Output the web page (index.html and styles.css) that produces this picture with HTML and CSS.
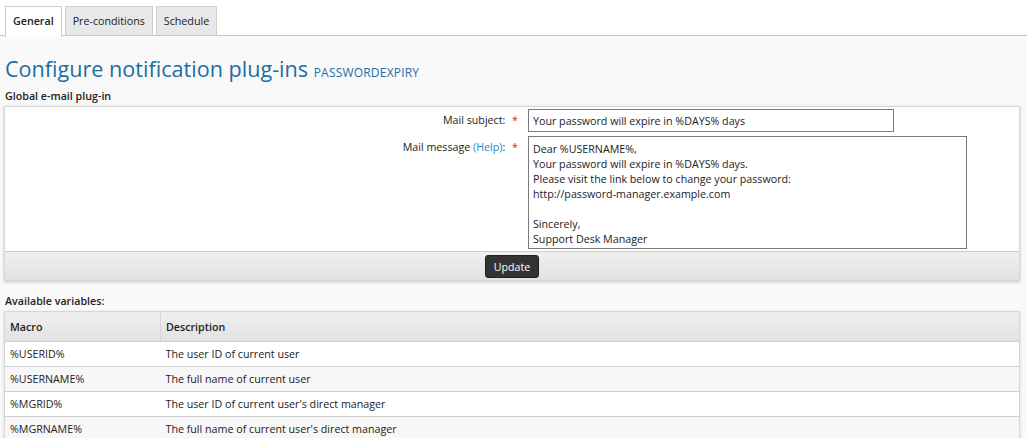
FILE: index.html
```html
<!DOCTYPE html>
<html lang="en">
<head>
    <meta charset="UTF-8">
    <title>Configure notification plug-ins</title>
    <link rel="stylesheet" href="styles.css">
</head>
<body>
    <div class="tabs">
        <a class="tab active" href="#">General</a>
        <a class="tab" href="#">Pre-conditions</a>
        <a class="tab" href="#">Schedule</a>
    </div>
    <div class="content">
        <h1>Configure notification plug-ins <small>PASSWORDEXPIRY</small></h1>
        <h3>Global e-mail plug-in</h3>
        <form class="panel">
            <div class="panel-body">
                <div class="row">
                    <label class="label">Mail subject: <span class="req">*</span></label>
                    <input type="text" class="subject" value="Your password will expire in %DAYS% days">
                </div>
                <div class="row">
                    <label class="label">Mail message <a href="#">(Help)</a>: <span class="req">*</span></label>
                    <textarea class="message">Dear %USERNAME%,
Your password will expire in %DAYS% days.
Please visit the link below to change your password:
http://password-manager.example.com

Sincerely,
Support Desk Manager</textarea>
                </div>
            </div>
            <div class="panel-footer">
                <button type="button" class="btn">Update</button>
            </div>
        </form>
        <h3 class="vars-title">Available variables:</h3>
        <table class="grid">
            <thead>
                <tr><th class="col-macro">Macro</th><th>Description</th></tr>
            </thead>
            <tbody>
                <tr><td>%USERID%</td><td>The user ID of current user</td></tr>
                <tr><td>%USERNAME%</td><td>The full name of current user</td></tr>
                <tr><td>%MGRID%</td><td>The user ID of current user's direct manager</td></tr>
                <tr><td>%MGRNAME%</td><td>The full name of current user's direct manager</td></tr>
            </tbody>
        </table>
    </div>
</body>
</html>
```

FILE: styles.css
```css
html, body {
    margin: 0;
    height: 100%;
}
body {
    font-family: "Open Sans", sans-serif;
    font-size: 10.7px;
    color: #222;
    background-color: #f9f9f9;
    overflow: hidden;
}
.tabs {
    display: flex;
    gap: 3px;
    padding: 6px 0 0 5px;
    background-color: #fff;
    border-bottom: 1px solid #c8c8c8;
    height: 29px;
    box-sizing: content-box;
}
.tab {
    display: block;
    padding: 0 7px;
    line-height: 28px;
    height: 28px;
    border: 1px solid #cfcfcf;
    border-bottom: none;
    background-color: #e8e8e8;
    color: #222;
    text-decoration: none;
}
.tab.active {
    background-color: #fff;
    font-weight: 600;
    height: 30px;
    margin-bottom: -1px;
}
.content {
    padding: 0 7px 0 4px;
}
h1 {
    font-size: 21.6px;
    font-weight: normal;
    color: #1c6ea4;
    margin: 19px 0 0 1px;
    line-height: 28px;
}
h1 small {
    font-size: 12px;
    line-height: 1;
    letter-spacing: 0.2px;
}
h3 {
    font-size: 10.7px;
    font-weight: 600;
    margin: 6px 0 3px 1px;
    line-height: 14px;
}
.panel {
    background-color: #fff;
    border: 1px solid #d6d6d6;
    box-shadow: 0 1px 3px rgba(0, 0, 0, 0.2);
    margin: 0;
}
.panel-body {
    display: flex;
    flex-direction: column;
    gap: 4px;
    padding: 2px 0;
}
.row {
    display: flex;
    align-items: flex-start;
}
.label {
    width: 518px;
    text-align: right;
    padding-right: 5px;
    padding-top: 4px;
    box-sizing: border-box;
}
.label a {
    color: #2a85c7;
    text-decoration: none;
}
.req {
    color: #c22;
    margin-left: 4px;
}
.subject, .message {
    font-family: "Open Sans", sans-serif;
    font-size: 10.7px;
    color: #222;
    border: 1px solid #7a7a7a;
    margin: 0 0 0 5px;
    padding: 2px 4px;
    box-sizing: border-box;
    outline: none;
}
.subject {
    width: 366px;
    height: 23px;
}
.message {
    width: 439px;
    height: 113px;
    line-height: 15px;
    padding-top: 5px;
    resize: none;
    overflow: hidden;
}
.panel-footer {
    border-top: 1px solid #ccc;
    background: linear-gradient(#f0f0f0, #e2e2e2);
    padding: 3px 0 2px;
    text-align: center;
    height: 23px;
}
.btn {
    font-family: "Open Sans", sans-serif;
    font-size: 10.7px;
    background-color: #333;
    color: #fff;
    border: 1px solid #222;
    border-radius: 3px;
    height: 23px;
    padding: 0 8px;
    cursor: pointer;
}
.vars-title {
    margin-top: 13px;
    margin-bottom: 3px;
}
.grid {
    width: 100%;
    border-collapse: collapse;
    background-color: #fff;
    border: 1px solid #d6d6d6;
    box-shadow: 0 1px 3px rgba(0, 0, 0, 0.15);
}
.grid th {
    text-align: left;
    font-weight: 600;
    height: 29px;
    padding: 0 5px;
    background: linear-gradient(#efefef, #e2e2e2);
    border-bottom: 1px solid #ccc;
}
.grid th.col-macro {
    width: 145px;
    border-right: 1px solid #d6d6d6;
}
.grid td {
    height: 24px;
    padding: 0 5px;
    border-bottom: 1px solid #d0d0d0;
}
.grid tbody tr:nth-child(even) {
    background-color: #f7f7f7;
}
```
